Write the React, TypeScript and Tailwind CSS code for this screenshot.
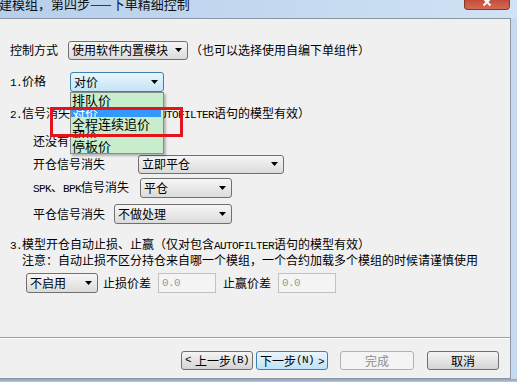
import React from "react";

function L({ children }: { children: React.ReactNode }) {
  return (
    <span className="font-['Liberation_Mono',monospace] text-[11px] tracking-[-0.6px]">{children}</span>
  );
}

function Arrow() {
  return (
    <svg width="7" height="4" viewBox="0 0 7 4" className="shrink-0">
      <path d="M0 0 H7 L3.5 4 Z" fill="#000" />
    </svg>
  );
}

function Combo({
  className,
  text,
  focus = false,
}: {
  className: string;
  text: string;
  focus?: boolean;
}) {
  const look = focus
    ? "border-[#3c7fb1] bg-linear-to-b from-[#eaf6fd] to-[#c3e4f6]"
    : "border-[#707070] bg-linear-to-b from-[#f6f6f6] to-[#dbdbdb]";
  return (
    <div
      className={`flex shrink-0 items-center justify-between rounded-[3px] border pl-[3px] pr-[5px] leading-none ${look} ${className}`}
    >
      <span>{text}</span>
      <Arrow />
    </div>
  );
}

function Field() {
  return (
    <div className="flex h-[20px] w-[58px] shrink-0 items-center border border-[#c2c2c2] bg-[#f4f4f4] pl-[3px] text-[#9a9a9a]">
      <L>0.0</L>
    </div>
  );
}

function Btn({
  className,
  children,
  kind = "normal",
}: {
  className: string;
  children: React.ReactNode;
  kind?: "normal" | "focus" | "disabled";
}) {
  const look =
    kind === "focus"
      ? "border-[#3c7fb1] bg-linear-to-b from-[#eaf6fd] to-[#bfe2f6] text-black"
      : kind === "disabled"
        ? "border-[#adb2b5] bg-[#f4f4f4] text-[#8d8d8d]"
        : "border-[#707070] bg-linear-to-b from-[#f4f4f4] to-[#d4d4d4] text-black";
  return (
    <div
      className={`flex h-[19px] shrink-0 items-center justify-center rounded-[3px] border leading-none ${look} ${className}`}
    >
      {children}
    </div>
  );
}

export default function App() {
  return (
    <div className="flex h-[382px] w-[517px] flex-col overflow-hidden bg-[#c6daf0] font-['Noto_Sans_CJK_SC','Liberation_Sans',sans-serif] text-[12px] text-black">
      {/* title bar */}
      <div className="flex h-[18px] shrink-0 bg-linear-to-r from-[#b6cfea] to-[#d0e2f5]">
        <div className="-ml-[1px] -mt-[4px] flex-1 text-[13px] leading-[16px] text-[#111]">
          建模组，第四步——下单精细控制
        </div>
        <div className="mr-[7px] flex h-[10px] w-[46px] justify-center overflow-hidden rounded-b-[4px] border border-t-0 border-[#8a3426] bg-linear-to-b from-[#c44c3b] to-[#d46a55]">
          <svg width="10" height="10" viewBox="0 0 10 10" className="-mt-[3px]">
            <path d="M1.5 1.5 L8.5 8.5 M8.5 1.5 L1.5 8.5" stroke="#fff" strokeWidth="2" />
          </svg>
        </div>
      </div>

      {/* body */}
      <div className="flex h-[361px] shrink-0">
        <div className="relative flex h-full w-[511px] shrink-0 flex-col border-y border-r border-[#8c96a3] bg-[#f0f0f0]">
          {/* row 1 */}
          <div className="mt-[21px] flex h-[20px] items-center pl-[10px]">
            <span>控制方式</span>
            <Combo className="ml-[10px] h-[19px] w-[120px]" text="使用软件内置模块" />
            <span className="ml-[2px]">（也可以选择使用自编下单组件）</span>
          </div>
          {/* row 2 */}
          <div className="mt-[12px] flex h-[20px] items-center pl-[10px]">
            <span>
              <L>1.</L>价格
            </span>
            <Combo className="ml-[24px] h-[20px] w-[94px]" text="对价" focus />
          </div>
          {/* row 3 */}
          <div className="mt-[12px] flex h-[20px] items-center pl-[10px]">
            <span>
              <L>2.</L>信号消失处理（仅对包含<L>AUTOFILTER</L>语句的模型有效）
            </span>
          </div>
          {/* row 4 */}
          <div className="mt-[7px] flex h-[20px] items-center pl-[33px]">
            <span>还没有开仓信号</span>
          </div>
          {/* row 5 */}
          <div className="mt-[3px] flex h-[20px] items-center pl-[33px]">
            <span>开仓信号消失</span>
            <Combo className="ml-[33px] h-[19px] w-[146px]" text="立即平仓" />
          </div>
          {/* row 6 */}
          <div className="mt-[4px] flex h-[20px] items-center pl-[33px]">
            <span>
              <L>SPK</L>、<L>BPK</L>信号消失
            </span>
            <Combo className="ml-[11px] h-[20px] w-[92px]" text="平仓" />
          </div>
          {/* row 7 */}
          <div className="mt-[6px] flex h-[20px] items-center pl-[33px]">
            <span>平仓信号消失</span>
            <Combo className="ml-[9px] h-[20px] w-[118px]" text="不做处理" />
          </div>
          {/* row 8 */}
          <div className="mt-[13px] flex h-[15px] items-center pl-[10px]">
            <span>
              <L>3.</L>模型开仓自动止损、止赢（仅对包含<L>AUTOFILTER</L>语句的模型有效）
            </span>
          </div>
          {/* row 9 */}
          <div className="flex h-[15px] items-center pl-[22px]">
            <span>注意：自动止损不区分持仓来自哪一个模组，一个合约加载多个模组的时候请谨慎使用</span>
          </div>
          {/* row 10 */}
          <div className="mt-[6px] flex h-[20px] items-center pl-[26px]">
            <Combo className="h-[20px] w-[72px]" text="不启用" />
            <span className="ml-[5px]">止损价差</span>
            <div className="ml-[7px]">
              <Field />
            </div>
            <span className="ml-[7px]">止赢价差</span>
            <div className="ml-[7px]">
              <Field />
            </div>
          </div>

          {/* footer */}
          <div className="mt-auto flex flex-col pb-[8px]">
            <div className="h-px bg-[#a0a0a0]" />
            <div className="h-px bg-white" />
            <div className="mt-[12px] flex justify-end pr-[11px]">
              <Btn className="w-[72px]">
                <L>&lt;</L>
                <span className="ml-[4px]">上一步</span>
                <L>(B)</L>
              </Btn>
              <Btn className="ml-[3px] w-[72px]" kind="focus">
                <span>下一步</span>
                <L>(N)</L>
                <span className="ml-[4px]">
                  <L>&gt;</L>
                </span>
              </Btn>
              <Btn className="ml-[12px] w-[74px]" kind="disabled">
                完成
              </Btn>
              <Btn className="ml-[13px] w-[72px]">取消</Btn>
            </div>
          </div>

          {/* dropdown list overlay */}
          <div className="absolute left-[70px] top-[73px] h-[62px] w-[94px] overflow-hidden border border-[#8a8a8a] bg-[#c7edcc] text-[13px] shadow-[2px_2px_2px_rgba(0,0,0,0.25)]">
            <div className="absolute left-[1px] top-0 h-[14px] leading-[14px]">排队价</div>
            <div className="absolute left-0 right-[2px] top-[16px] h-[8px] overflow-hidden bg-[#3399ff] pl-[1px] text-white">
              <div className="-mt-[3px] leading-[14px]">对价</div>
            </div>
            <div className="absolute left-[1px] top-[24px] h-[14px] leading-[14px]">全程连续追价</div>
            <div className="absolute left-[1px] top-[36px] h-[14px] leading-[14px]">超价</div>
            <div className="absolute left-0 right-0 top-[45px] h-[16px] bg-[#c7edcc] pl-[1px] leading-[16px]">
              停板价
            </div>
          </div>

          {/* red annotation box */}
          <div className="absolute left-[50px] top-[88px] h-[30px] w-[133px] border-[3px] border-[#e3141c]" />
        </div>
        <div className="flex-1 bg-[#c6daf0]" />
      </div>
      <div className="flex-1 bg-linear-to-b from-[#8ea3bb] to-[#b4c9e0]" />
    </div>
  );
}
